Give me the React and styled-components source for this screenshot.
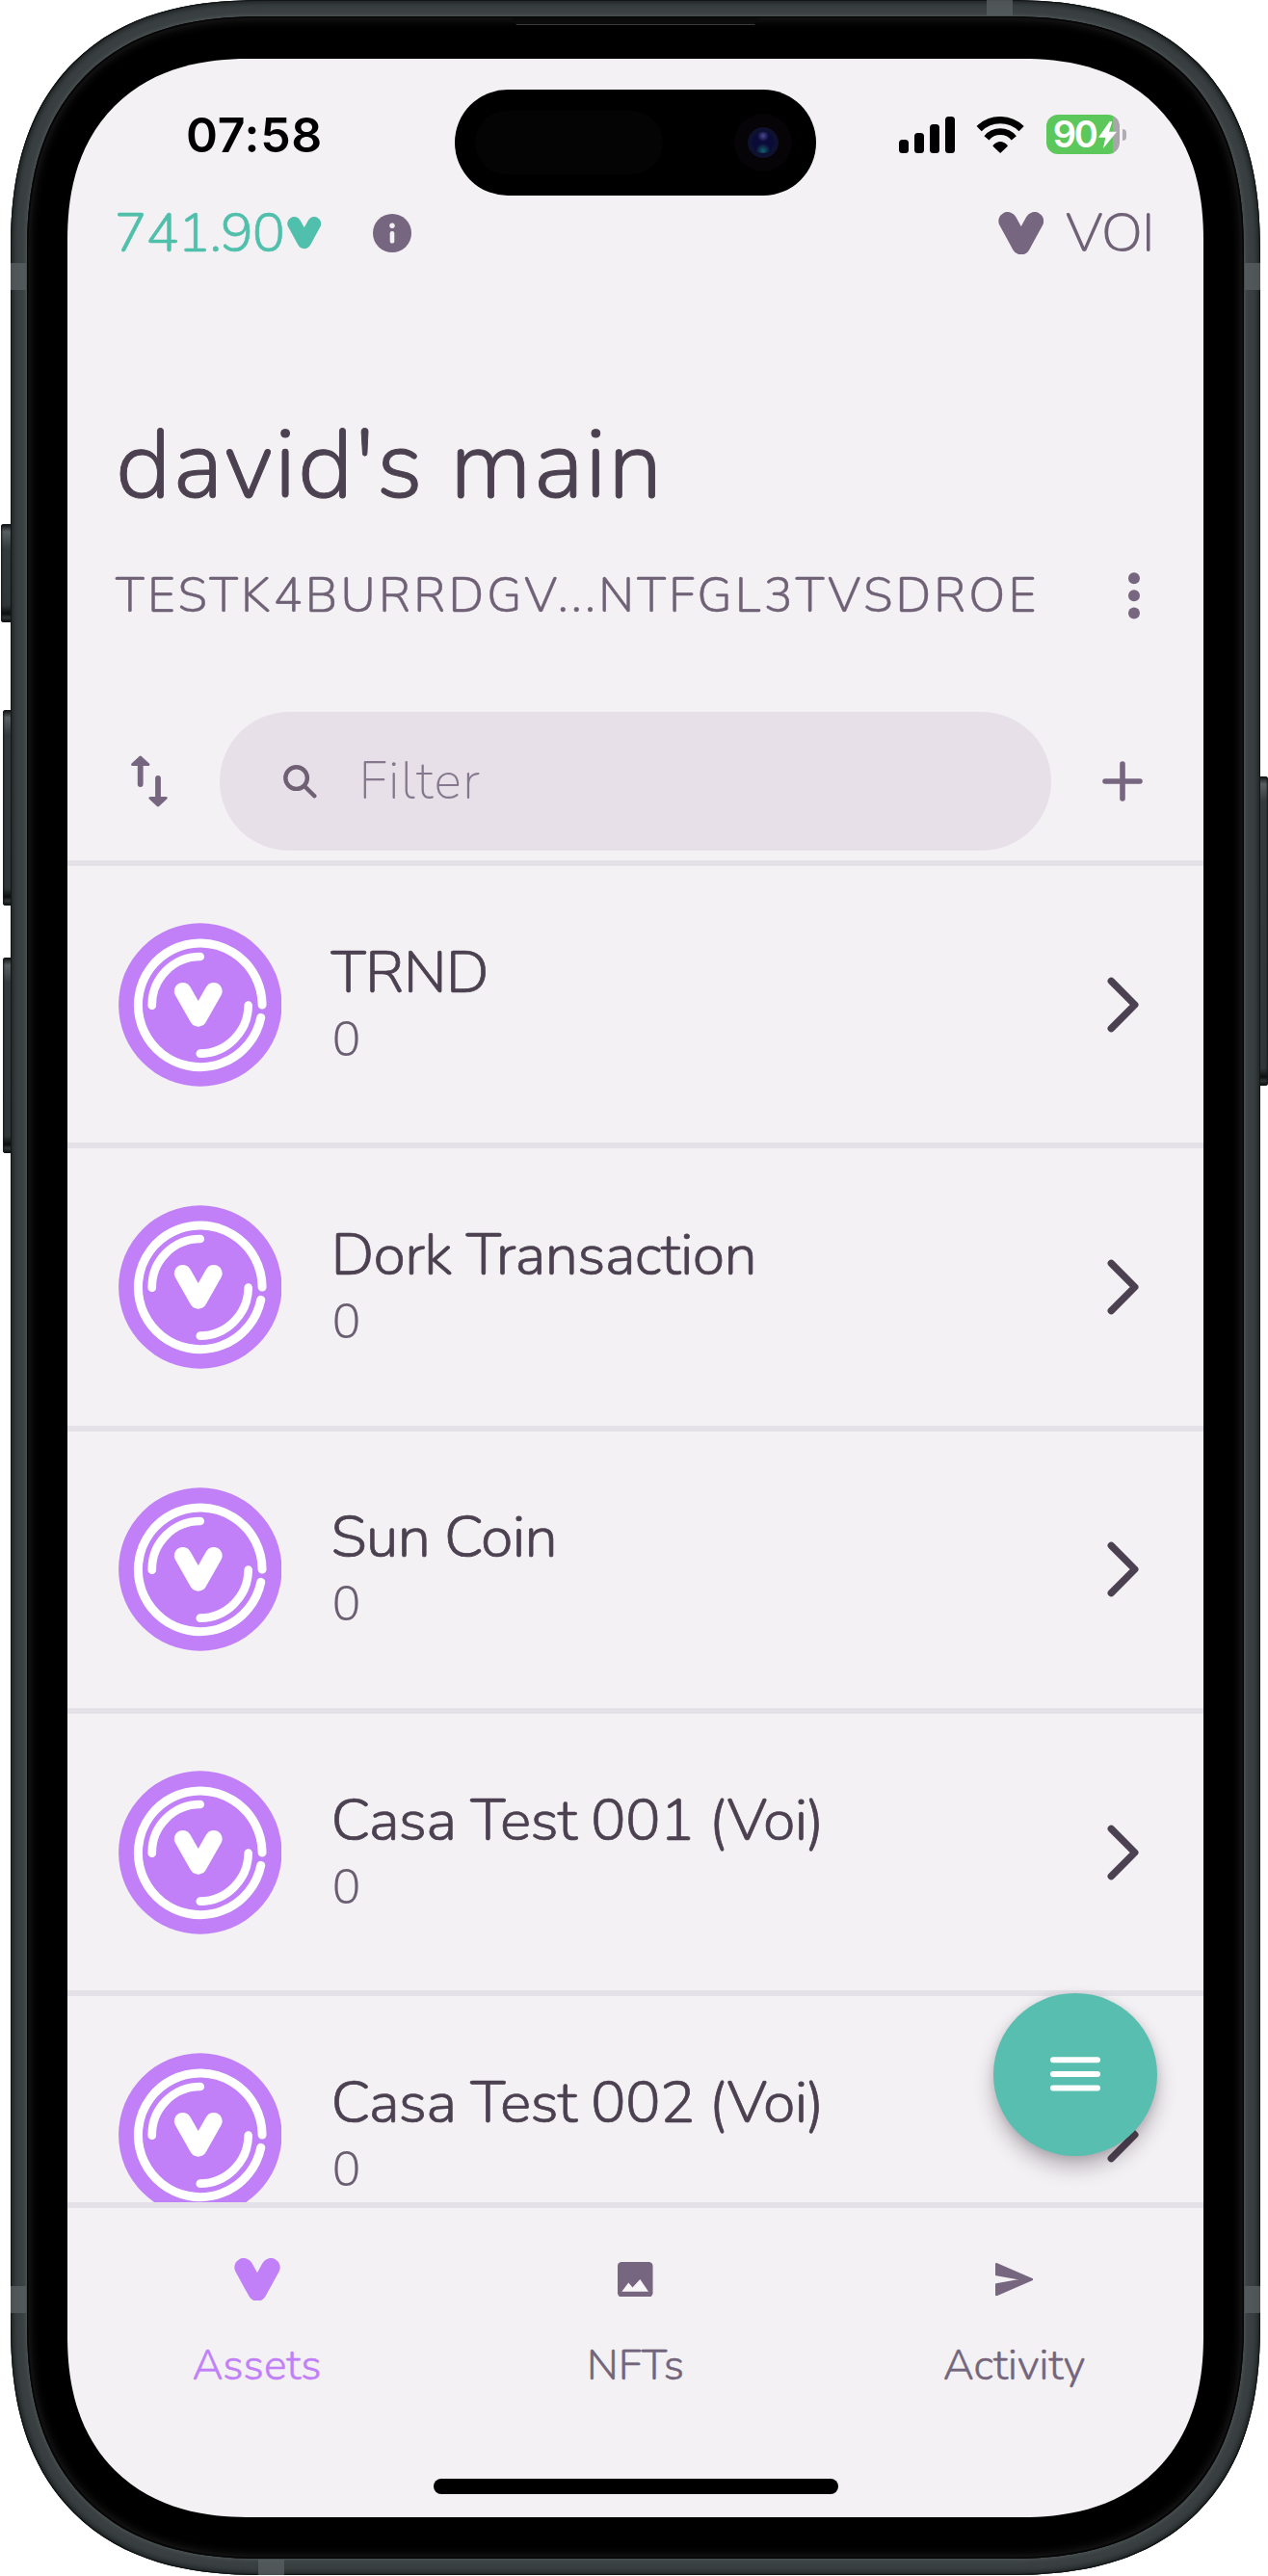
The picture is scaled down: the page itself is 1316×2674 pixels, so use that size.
import React from 'react';
import styled, { createGlobalStyle } from 'styled-components';

const colors = {
  background: '#f3f1f4',
  divider: '#e4e1e8',
  field: '#e7e0e9',
  title: '#4c4150',
  muted: '#73657b',
  icon: '#77667f',
  teal: '#58bfb0',
  purple: '#c17ff8',
};

const assets = ['TRND', 'Dork Transaction', 'Sun Coin', 'Casa Test 001 (Voi)', 'Casa Test 002 (Voi)'];

const GlobalStyle = createGlobalStyle`
  * { box-sizing: border-box; }
  body {
    margin: 0;
    background: #fff;
    font-family: Nunito, "Open Sans", sans-serif;
    font-weight: 300;
  }
  svg { display: block; flex: none; }
`;

/* ---------- device ---------- */

const Device = styled.div`
  position: relative;
  width: 1316px;
  height: 2674px;
  padding: 0 8px 0 11px;
  overflow: hidden;
`;

const Metal = styled.div`
  position: relative;
  height: 2673px;
  padding: 17px;
  border-radius: 262px;
  corner-shape: superellipse(1.28);
  background: #3a4041;
  box-shadow: inset 0 0 0 1px #131617, inset 0 0 6px 2px #15191a;
`;

const Bezel = styled.div`
  position: relative;
  height: 100%;
  padding: 44px 42px 43px;
  border-radius: 246px;
  corner-shape: superellipse(1.28);
  background: #000;
  box-shadow: 0 0 5px 0 #5c6365, inset 0 0 0 1.5px #060606, inset 0 0 12px 1px #2a2a2a;
`;

const Screen = styled.div`
  position: relative;
  display: flex;
  flex-direction: column;
  height: 2552px;
  overflow: hidden;
  border-radius: 188px;
  corner-shape: superellipse(1.2);
  background: ${colors.background};
`;

const SideButton = styled.div`
  position: absolute;
  ${(p) => p.$side}: ${(p) => p.$inset}px;
  top: ${(p) => p.$top}px;
  width: 12px;
  height: ${(p) => p.$height}px;
  border-radius: 3px;
  background: linear-gradient(
    #0e1112 0,
    #596061 8px,
    #343a3b 26px,
    #303637 calc(100% - 18px),
    #0c0e0f calc(100% - 9px),
    #2f3536 calc(100% - 5px),
    #0a0c0c 100%
  );
  box-shadow: inset 0 0 2px 1px #14181a;
`;

const AntennaBand = styled.div`
  position: absolute;
  ${(p) => p.$x}: ${(p) => p.$dx}px;
  ${(p) => p.$y}: ${(p) => p.$dy}px;
  width: ${(p) => (p.$across ? 27 : 16)}px;
  height: ${(p) => (p.$across ? 16 : 28)}px;
  background: #575e60;
  opacity: 0.8;
`;

const Earpiece = styled.div`
  position: absolute;
  left: 503px;
  top: 1px;
  width: 257px;
  height: 8px;
  clip-path: polygon(0 0, 100% 0, calc(100% - 5px) 100%, 5px 100%);
  background: linear-gradient(#0b0b0b 6.5px, #3a3a3a 7px);
`;

/* ---------- status bar ---------- */

const StatusBar = styled.header`
  display: flex;
  height: 145px;
  padding-top: 32px;
`;

const Time = styled.div`
  display: flex;
  width: 402px;
  height: 93px;
  padding-right: 14px;
  align-items: center;
  justify-content: center;
  color: #000;
  font: 600 50px/60px Inter, "Liberation Sans", sans-serif;
  letter-spacing: 0.7px;
`;

const Island = styled.div`
  display: flex;
  align-items: center;
  justify-content: space-between;
  width: 375px;
  height: 110px;
  padding: 0 25px 0 21px;
  border-radius: 55px;
  background: #000;
`;

const Sensor = styled.div`
  width: 195px;
  height: 66px;
  border-radius: 33px;
  background: #040404;
`;

const Camera = styled.div`
  display: grid;
  place-items: center;
  width: 60px;
  height: 60px;
  border-radius: 50%;
  background: #070407;
`;

const Lens = styled.div`
  width: 32px;
  height: 32px;
  border: 5px solid #0f1130;
  border-radius: 50%;
  background:
    radial-gradient(circle at 50% 18%, #4a4a92 0, rgba(42, 42, 120, 0) 28%),
    radial-gradient(circle at 50% 88%, #12606a 0, rgba(18, 60, 100, 0) 34%),
    #0c0a38;
`;

const StatusIcons = styled.div`
  display: flex;
  align-items: center;
  height: 93px;
  padding-left: 85.5px;
`;

const Signal = styled.div`
  display: flex;
  align-items: flex-end;
  gap: 5.8px;
  height: 38px;
  margin-right: 22px;
`;

const SignalBar = styled.div`
  width: 10.4px;
  height: ${(p) => p.$height}px;
  border-radius: 3.5px;
  background: #000;
`;

const Battery = styled.div`
  display: flex;
  align-items: center;
  gap: 3px;
  width: 76px;
  height: 41px;
  margin-left: 22px;
  padding-left: 7px;
  border-radius: 12px;
  background: linear-gradient(90deg, #5cc85c 69.5px, #a9a5a9 69.5px);
  color: #fff;
  font: 600 38px/41px Inter, "Liberation Sans", sans-serif;
  letter-spacing: -2.4px;
`;

const BatteryTip = styled.div`
  width: 4px;
  height: 12px;
  margin-left: 3px;
  border-radius: 0 5px 5px 0;
  background: #b0adb3;
`;

/* ---------- wallet header ---------- */

const TopBar = styled.div`
  display: flex;
  align-items: center;
  height: 72px;
  padding: 0 51.5px 0 48.5px;
  font-size: 57px;
  line-height: 72px;
  letter-spacing: -1.2px;
  -webkit-text-stroke: 0.6px currentColor;
`;

const Balance = styled.div`
  display: flex;
  align-items: center;
  gap: 3px;
  width: 215px;
  margin-right: 53.5px;
  color: #50bfab;
`;

const Network = styled.div`
  display: flex;
  align-items: center;
  gap: 23px;
  margin-left: auto;
  color: #6f6176;
  -webkit-text-stroke: 0;
`;

const Account = styled.section`
  padding: 137px 50px 0;
`;

const AccountName = styled.h1`
  margin: 0;
  color: ${colors.title};
  font-size: 100px;
  font-weight: 300;
  line-height: 136px;
  letter-spacing: 1.65px;
  -webkit-text-stroke: 0.9px currentColor;
`;

const AddressRow = styled.div`
  display: flex;
  align-items: center;
  justify-content: space-between;
  height: 60px;
  margin-top: 37px;
  padding-right: 16.5px;
  color: #6f6176;
  font-size: 50px;
  letter-spacing: 3.2px;
  -webkit-text-stroke: 0.4px currentColor;
`;

const Toolbar = styled.div`
  display: flex;
  align-items: center;
  margin-top: 91px;
  padding: 0 63px 10px 66px;
  border-bottom: 6px solid ${colors.divider};
  color: ${colors.icon};
`;

const FilterField = styled.div`
  display: flex;
  align-items: center;
  width: 863px;
  height: 144px;
  margin-left: 54px;
  margin-right: auto;
  padding-left: 66px;
  gap: 43.5px;
  border-radius: 72px;
  background: ${colors.field};
`;

const Placeholder = styled.span`
  color: #85788c;
  font-size: 54px;
  font-weight: 200;
  letter-spacing: 1.5px;
`;

/* ---------- list ---------- */

const AssetList = styled.main`
  flex: 1;
  min-height: 0;
  overflow: hidden;
`;

const AssetRow = styled.div`
  display: flex;
  align-items: center;
  height: 293.33px;
  padding: 0 66px 0 52.5px;
  border-bottom: 6px solid ${colors.divider};
`;

const AssetText = styled.div`
  flex: 1;
  padding: 0 0 5px 51.5px;
`;

const AssetName = styled.div`
  color: ${colors.title};
  font-size: 61px;
  line-height: 78px;
  letter-spacing: -0.7px;
  -webkit-text-stroke: 0.7px currentColor;
`;

const AssetAmount = styled.div`
  color: #6a5f70;
  font-size: 50px;
  line-height: 61px;
  padding-left: 1px;
`;

const ActionButton = styled.button`
  position: absolute;
  left: 961px;
  top: 2007.5px;
  display: grid;
  place-items: center;
  width: 169.5px;
  height: 169.5px;
  padding: 0;
  border: 0;
  border-radius: 50%;
  background: ${colors.teal};
  box-shadow: 0 12px 20px rgba(50, 35, 50, 0.3), 0 2px 8px rgba(50, 35, 50, 0.12);
`;

/* ---------- tab bar ---------- */

const TabBar = styled.nav`
  display: flex;
  flex-direction: column;
  align-items: center;
  justify-content: space-between;
  height: 327px;
  padding: 50px 0 24px;
  border-top: 6px solid ${colors.divider};
`;

const Tabs = styled.div`
  display: grid;
  grid-template-columns: repeat(3, 1fr);
  width: 100%;
`;

const Tab = styled.div`
  display: flex;
  flex-direction: column;
  align-items: center;
  gap: 35.5px;
  color: ${(p) => (p.$active ? colors.purple : colors.muted)};
  font-size: 44.5px;
  line-height: 60px;
  -webkit-text-stroke: 0.5px currentColor;
`;

const TabIcon = styled.div`
  display: grid;
  place-items: center;
  height: 48px;
`;

const HomeIndicator = styled.div`
  width: 420px;
  height: 16px;
  border-radius: 8px;
  background: #000;
`;

/* ---------- drawings ---------- */

const Voi = ({ width, color = 'currentColor' }) => (
  <svg width={width} height={(width * 133) / 142} viewBox="0 0 142 133" fill="none">
    <path
      d="M29.5 28.5 71 104l41.5-75.5"
      stroke={color}
      strokeWidth="57"
      strokeLinecap="round"
      strokeLinejoin="round"
    />
  </svg>
);

const Wifi = () => (
  <svg width="50.3" height="38" viewBox="0 0 151 114" fill="none" stroke="#000">
    <path d="M9.5 38A94 94 0 0 1 141.5 38" strokeWidth="22" />
    <path d="M33 67A55 55 0 0 1 118 67" strokeWidth="20" />
    <path d="M55 91Q75.5 70 96 91L75.5 111Z" strokeWidth="5" strokeLinejoin="round" fill="#000" />
  </svg>
);

const Bolt = () => (
  <svg width="19" height="28" viewBox="0 0 57 84" fill="#fff">
    <path d="M35 0 0 50h22l-7 34 42-52H33L43 0Z" />
  </svg>
);

const Info = () => (
  <svg width="40" height="40" viewBox="0 0 40 40">
    <circle cx="20" cy="20" r="20" fill={colors.icon} />
    <circle cx="20" cy="12.3" r="2.7" fill={colors.background} />
    <rect x="17.7" y="18" width="4.6" height="12.6" rx="2.2" fill={colors.background} />
  </svg>
);

const Kebab = () => (
  <svg width="12" height="49" viewBox="0 0 12 49" fill={colors.icon}>
    <circle cx="6" cy="6.2" r="6" />
    <circle cx="6" cy="24.2" r="6" />
    <circle cx="6" cy="42.6" r="6" />
  </svg>
);

const Sort = () => (
  <svg width="38" height="54" viewBox="0 0 38 54" fill={colors.icon} stroke={colors.icon}>
    <path d="M9.7 8V30M28 24V46" strokeWidth="5.8" strokeLinecap="round" />
    <path d="M9.7 2 17.8 9.6H1.6ZM28 52 36.1 44.4H19.9Z" strokeWidth="3" strokeLinejoin="round" />
  </svg>
);

const Search = () => (
  <svg width="35" height="35" viewBox="0 0 35 35" fill="none" stroke="#6f6074" strokeWidth="4.4">
    <circle cx="13.6" cy="13.6" r="11.3" />
    <path d="M22.5 22.5 32.3 32.3" strokeLinecap="round" />
  </svg>
);

const Plus = () => (
  <svg width="42" height="42" viewBox="0 0 42 42" stroke={colors.icon} strokeWidth="5.6" strokeLinecap="round">
    <path d="M21 3V39M3 21H39" />
  </svg>
);

const Chevron = () => (
  <svg width="34" height="58" viewBox="0 0 34 58" fill="none">
    <path
      d="M4.3 4.3 28.8 29 4.3 53.7"
      stroke={colors.title}
      strokeWidth="7.4"
      strokeLinecap="round"
      strokeLinejoin="round"
    />
  </svg>
);

const Coin = () => (
  <svg width="169.5" height="170" viewBox="0 0 508 510" fill="none" stroke="#fff" strokeLinecap="round">
    <circle cx="254" cy="255" r="254" fill={colors.purple} stroke="none" />
    <path d="M447 255A193 193 0 1 0 443 295" strokeWidth="27" />
    <path d="M104 257A150 150 0 0 1 254 105M404 257A152 152 0 0 1 254 407" strokeWidth="26" />
    <g transform="translate(172 185) scale(1.07 1.045)">
      <path d="M26 26 71 107l45-81" strokeWidth="50" strokeLinejoin="round" />
    </g>
  </svg>
);

const Menu = () => (
  <svg width="54" height="36" viewBox="0 0 54 36" stroke="#fff" strokeWidth="6" strokeLinecap="round">
    <path d="M4 3.3H50M4 18H50M4 32.5H50" />
  </svg>
);

const Picture = () => (
  <svg width="36.5" height="36.5" viewBox="0 0 36.5 36.5">
    <rect width="36.5" height="36.5" rx="4.2" fill={colors.icon} />
    <path d="M4.3 30.7 11.3 21.5l4.2 5L23.3 18 32 30.7Z" fill="#f8f6f9" />
  </svg>
);

const Send = () => (
  <svg width="39.5" height="34.5" viewBox="0 0 39.5 34.5" fill={colors.icon} stroke={colors.icon}>
    <path d="M1 1 38.5 17.2 1 33.4V22.2L29 17.2 1 12.2Z" strokeWidth="2" strokeLinejoin="round" />
  </svg>
);

export default function App() {
  return (
    <>
      <GlobalStyle />
      <Device>
        <SideButton $side="left" $inset={1} $top={544} $height={102} />
        <SideButton $side="left" $inset={3} $top={737} $height={203} />
        <SideButton $side="left" $inset={3} $top={994} $height={203} />
        <SideButton $side="right" $inset={0} $top={806} $height={321} />
        <Metal>
          <AntennaBand $x="left" $dx={0} $y="top" $dy={273} />
          <AntennaBand $x="right" $dx={0} $y="top" $dy={273} />
          <AntennaBand $x="left" $dx={0} $y="bottom" $dy={272} />
          <AntennaBand $x="right" $dx={0} $y="bottom" $dy={272} />
          <AntennaBand $across $x="right" $dx={257} $y="top" $dy={0} />
          <AntennaBand $across $x="left" $dx={257} $y="bottom" $dy={0} />
          <Bezel>
            <Earpiece />
            <Screen>
              <StatusBar>
                <Time>07:58</Time>
                <Island>
                  <Sensor />
                  <Camera>
                    <Lens />
                  </Camera>
                </Island>
                <StatusIcons>
                  <Signal>
                    {[14, 21, 29.3, 37.7].map((h) => (
                      <SignalBar key={h} $height={h} />
                    ))}
                  </Signal>
                  <Wifi />
                  <Battery>
                    90
                    <Bolt />
                  </Battery>
                  <BatteryTip />
                </StatusIcons>
              </StatusBar>

              <TopBar>
                <Balance>
                  <span>741.90</span>
                  <Voi width={35.5} />
                </Balance>
                <Info />
                <Network>
                  <Voi width={47.5} color={colors.icon} />
                  <span>VOI</span>
                </Network>
              </TopBar>

              <Account>
                <AccountName>david's main</AccountName>
                <AddressRow>
                  <span>TESTK4BURRDGV...NTFGL3TVSDROE</span>
                  <Kebab />
                </AddressRow>
              </Account>

              <Toolbar>
                <Sort />
                <FilterField>
                  <Search />
                  <Placeholder>Filter</Placeholder>
                </FilterField>
                <Plus />
              </Toolbar>

              <AssetList>
                {assets.map((name) => (
                  <AssetRow key={name}>
                    <Coin />
                    <AssetText>
                      <AssetName>{name}</AssetName>
                      <AssetAmount>0</AssetAmount>
                    </AssetText>
                    <Chevron />
                  </AssetRow>
                ))}
              </AssetList>

              <TabBar>
                <Tabs>
                  <Tab $active>
                    <TabIcon>
                      <Voi width={48} />
                    </TabIcon>
                    Assets
                  </Tab>
                  <Tab>
                    <TabIcon>
                      <Picture />
                    </TabIcon>
                    NFTs
                  </Tab>
                  <Tab>
                    <TabIcon>
                      <Send />
                    </TabIcon>
                    Activity
                  </Tab>
                </Tabs>
                <HomeIndicator />
              </TabBar>

              <ActionButton aria-label="Actions">
                <Menu />
              </ActionButton>
            </Screen>
          </Bezel>
        </Metal>
      </Device>
    </>
  );
}
